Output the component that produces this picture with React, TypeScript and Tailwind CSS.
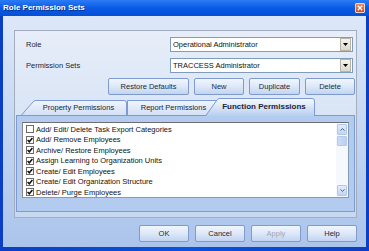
import type { ReactNode } from 'react';

type Perm = { label: string; checked: boolean };

const perms: Perm[] = [
  { label: 'Add/ Edit/ Delete Task Export Categories', checked: false },
  { label: 'Add/ Remove Employees', checked: true },
  { label: 'Archive/ Restore Employees', checked: true },
  { label: 'Assign Learning to Organization Units', checked: true },
  { label: 'Create/ Edit Employees', checked: true },
  { label: 'Create/ Edit Organization Structure', checked: true },
  { label: 'Delete/ Purge Employees', checked: true },
];

function XpButton({
  children,
  className = '',
  disabled = false,
}: {
  children: ReactNode;
  className?: string;
  disabled?: boolean;
}) {
  return (
    <button
      type="button"
      className={`h-[17px] flex items-center justify-center rounded-[2px] border border-[#7f9acb] bg-gradient-to-b from-[#f1f6fd] via-[#dde8f8] to-[#c2d4f0] text-[7.5px] leading-none ${
        disabled ? 'text-[#9aa6b8]' : 'text-[#1d2a3b]'
      } ${className}`}
    >
      {children}
    </button>
  );
}

function Dropdown({ value }: { value: string }) {
  return (
    <div className="w-[183px] h-[15px] flex items-center border border-[#7f9db9] bg-white">
      <span className="flex-1 pl-[2px] text-[7.5px] leading-none text-[#111]">{value}</span>
      <span className="w-[11px] h-[13px] mr-[1px] flex items-center justify-center border border-[#b9b6a8] bg-gradient-to-b from-[#f4f3ee] to-[#dcd9cc]">
        <svg width="5" height="3" viewBox="0 0 5 3">
          <path d="M0 0h5L2.5 3z" fill="#000" />
        </svg>
      </span>
    </div>
  );
}

function Checkbox({ checked }: { checked: boolean }) {
  return (
    <span className="w-[8px] h-[8px] shrink-0 flex items-center justify-center border border-[#6b6b6b] bg-white">
      {checked && (
        <svg width="6" height="6" viewBox="0 0 6 6">
          <path d="M0.6 3 L2.3 4.8 L5.4 1" fill="none" stroke="#111" strokeWidth="1.5" />
        </svg>
      )}
    </span>
  );
}

function Tab({
  label,
  width,
  height,
  selected = false,
  slant = true,
  className = '',
}: {
  label: string;
  width: number;
  height: number;
  selected?: boolean;
  slant?: boolean;
  className?: string;
}) {
  const s = slant ? 13 : 0;
  const d = slant
    ? `M0.5 ${height} L${s - 1} 2 Q${s} 0.5 ${s + 2} 0.5 L${width - 3} 0.5 Q${width - 0.5} 0.5 ${width - 0.5} 3 L${width - 0.5} ${height}`
    : `M0.5 ${height} L0.5 0.5 L${width - 0.5} 0.5 L${width - 0.5} ${height}`;
  const id = `g-${label.replace(/\s/g, '')}`;
  return (
    <div className={`relative shrink-0 ${className}`} style={{ width, height }}>
      <svg className="absolute inset-0" width={width} height={height}>
        <defs>
          <linearGradient id={id} x1="0" y1="0" x2="0" y2="1">
            <stop offset="0" stopColor={selected ? '#f7faff' : '#f0f5fd'} />
            <stop offset="1" stopColor={selected ? '#b8cff0' : '#d3e0f5'} />
          </linearGradient>
        </defs>
        <path d={`${d} Z`} fill={`url(#${id})`} stroke="none" />
        <path d={d} fill="none" stroke="#7b9bd2" strokeWidth="1" />
      </svg>
      <span
        className={`relative flex h-full items-center justify-center leading-none text-[#1b2636] ${
          selected ? 'text-[8px] font-bold pl-[8px]' : 'text-[7.5px] pl-[9px]'
        }`}
      >
        {label}
      </span>
    </div>
  );
}

export default function App() {
  return (
    <div className="w-[369px] h-[251px] flex flex-col bg-gradient-to-r from-[#0a3fc4] via-[#0b52dc] to-[#0a3fc4] font-['Liberation_Sans',Arial,sans-serif]">
      {/* title bar */}
      <div className="h-[16px] shrink-0 flex items-center justify-between bg-gradient-to-b from-[#2b7cf3] via-[#0a5ae6] to-[#0650d6]">
        <span className="pl-[3px] text-[8px] font-bold leading-none text-white [text-shadow:1px_1px_0_#0a2f8a]">
          Role Permission Sets
        </span>
        <span className="mr-[4px] w-[10px] h-[10px] flex items-center justify-center rounded-[1px] border border-[#f2d6cc] bg-gradient-to-b from-[#f08a5e] to-[#d3461a]">
          <svg width="6" height="6" viewBox="0 0 6 6">
            <path d="M0.8 0.8 L5.2 5.2 M5.2 0.8 L0.8 5.2" stroke="#fff" strokeWidth="1.3" />
          </svg>
        </span>
      </div>

      {/* body */}
      <div className="flex-1 mx-[3px] mb-[4px] flex flex-col bg-gradient-to-b from-[#dde8f9] to-[#abc4eb]">
        <div className="mt-[14px] ml-[11px] w-[343px] h-[188px] flex flex-col border border-[#a3adbd] bg-gradient-to-b from-[#e7eef9] to-[#c7d8f1]">
          <div className="mt-[6px] flex items-center">
            <span className="w-[155px] pl-[11px] text-[7.5px] leading-none text-[#1b2636]">Role</span>
            <Dropdown value="Operational Administrator" />
          </div>
          <div className="mt-[6px] flex items-center">
            <span className="w-[155px] pl-[11px] text-[7.5px] leading-none text-[#1b2636]">
              Permission Sets
            </span>
            <Dropdown value="TRACCESS Administrator" />
          </div>

          <div className="mt-[5px] flex justify-end gap-[5px] pr-[1px]">
            <XpButton className="w-[81px]">Restore Defaults</XpButton>
            <XpButton className="w-[50px]">New</XpButton>
            <XpButton className="w-[51px]">Duplicate</XpButton>
            <XpButton className="w-[50px]">Delete</XpButton>
          </div>

          {/* tabs */}
          <div className="mt-[3px] h-[17px] flex items-end pl-[6px]">
            <Tab label="Property Permissions" width={106} height={15} />
            <Tab label="Report Permissions" width={90} height={15} slant={false} className="pr-[6px]" />
            <Tab
              label="Function Permissions"
              width={110}
              height={18}
              selected
              className="ml-[-12px] mb-[-1px] z-10"
            />
          </div>

          <div className="mx-[1px] h-[97px] border border-[#7b9bd2] bg-[#b3cbee] pt-[6px] px-[5px]">
            <div className="h-[76px] flex border border-[#7f9db9] border-t-[#6e6e6e] border-l-[#8a8a8a] bg-white">
              <div className="flex-1 pt-[1px] pl-[3px]">
                {perms.map((p) => (
                  <div key={p.label} className="h-[10.5px] flex items-center gap-[2px]">
                    <Checkbox checked={p.checked} />
                    <span className="text-[7.5px] leading-none text-[#111]">{p.label}</span>
                  </div>
                ))}
              </div>
              <div className="w-[12px] flex flex-col p-[1px] bg-[#f5f8fd]">
                <span className="h-[11px] flex items-center justify-center rounded-[1px] border border-[#b5c8ec] bg-gradient-to-b from-[#e3ecfb] to-[#c2d4f4]">
                  <svg width="5" height="3" viewBox="0 0 5 3">
                    <path d="M0.5 2.5 L2.5 0.7 L4.5 2.5" fill="none" stroke="#4d6185" strokeWidth="1" />
                  </svg>
                </span>
                <span className="mt-[1px] h-[10px] rounded-[1px] border border-[#b5c8ec] bg-gradient-to-r from-[#cddcf7] to-[#bcd0f3]" />
                <span className="flex-1" />
                <span className="h-[11px] flex items-center justify-center rounded-[1px] border border-[#b5c8ec] bg-gradient-to-b from-[#e3ecfb] to-[#c2d4f4]">
                  <svg width="5" height="3" viewBox="0 0 5 3">
                    <path d="M0.5 0.5 L2.5 2.3 L4.5 0.5" fill="none" stroke="#4d6185" strokeWidth="1" />
                  </svg>
                </span>
              </div>
            </div>
          </div>
        </div>

        <div className="mt-[7px] flex justify-end gap-[6px] pr-[9px]">
          <XpButton className="w-[50px]">OK</XpButton>
          <XpButton className="w-[50px]">Cancel</XpButton>
          <XpButton className="w-[50px]" disabled>
            Apply
          </XpButton>
          <XpButton className="w-[50px]">Help</XpButton>
        </div>
      </div>
    </div>
  );
}
